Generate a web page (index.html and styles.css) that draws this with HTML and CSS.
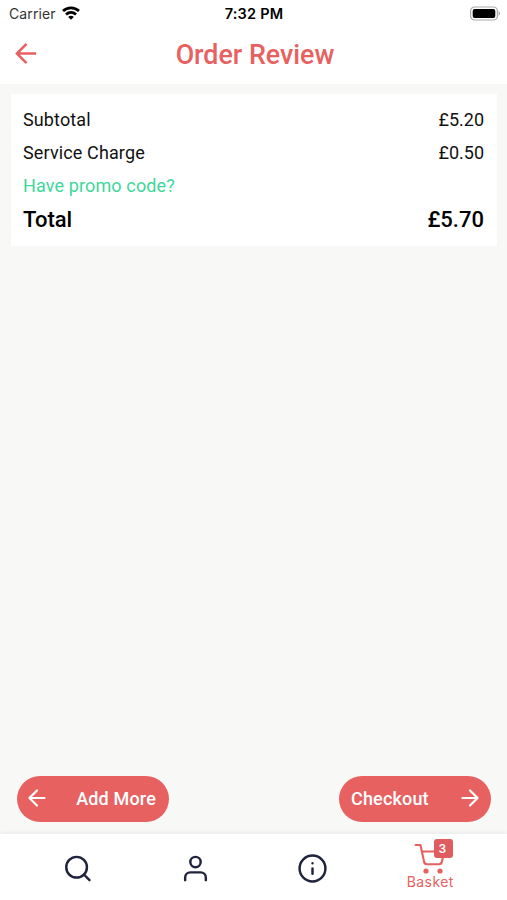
FILE: index.html
```html
<!DOCTYPE html>
<html lang="en">
<head>
<meta charset="utf-8">
<title>Order Review</title>
<link rel="stylesheet" href="styles.css">
</head>
<body>
<div class="app">
  <div class="status">
    <div class="carrier"><span>Carrier</span>
      <svg class="wifi" width="18" height="14" viewBox="0 0 18 14" fill="none" stroke="#000" stroke-width="2.8"><path d="M1 5.1C5.5.8 12.500.8 17 5.100"/><path d="M4 8.500C6.900 5.800 11.100 5.800 14 8.500"/><path d="M9 13.700L6.200 10.900C7.800 9.500 10.200 9.500 11.800 10.900Z" fill="#000" stroke="none"/></svg>
    </div>
    <span class="time">7:32 PM</span>
    <div class="power"><svg width="31" height="16" viewBox="0 0 31 16"><rect x=".6" y="1" width="26.800" height="13" rx="4" fill="#fff" stroke="#aaa" stroke-width="1.200"/><rect x="2.700" y="3" width="22.600" height="9" rx="2" fill="#000"/><path d="M28.600 5.300c2 .8 2 3.600 0 4.400z" fill="#aaa"/></svg></div>
  </div>
  <header class="header">
    <svg class="back" width="33" height="33" viewBox="0 0 24 24"><path d="M19 12H5M12 19l-7-7 7-7"/></svg>
    <h1>Order Review</h1>
    <span></span>
  </header>
  <main class="content">
    <section class="summary">
      <div class="row"><span>Subtotal</span><span>£5.20</span></div>
      <div class="row"><span>Service Charge</span><span>£0.50</span></div>
      <div class="row promo"><span>Have promo code?</span></div>
      <div class="row total"><span>Total</span><span>£5.70</span></div>
    </section>
    <div class="actions">
      <button class="button"><svg width="26" height="26" viewBox="0 0 24 24"><path d="M19 12H5M12 19l-7-7 7-7"/></svg><span>Add More</span></button>
      <button class="button"><span>Checkout</span><svg width="26" height="26" viewBox="0 0 24 24"><path d="M5 12h14M12 5l7 7-7 7"/></svg></button>
    </div>
  </main>
  <nav class="tabs">
    <div class="tab"><svg width="31" height="31" viewBox="0 0 24 24"><circle cx="11.300" cy="11" r="8"/><path d="M21.300 21l-4.350-4.350"/></svg></div>
    <div class="tab"><svg width="31" height="31" viewBox="0 0 24 24"><path d="M20 21v-2a4 4 0 0 0-4-4H8a4 4 0 0 0-4 4v2"/><circle cx="12" cy="7" r="4"/></svg></div>
    <div class="tab"><svg width="31" height="31" viewBox="0 0 24 24"><circle cx="12" cy="12" r="10"/><path d="M12 16v-4M12 8h.01"/></svg></div>
    <div class="tab active">
      <div class="cart">
        <svg width="32" height="32" viewBox="0 0 32 32"><path d="M1.500 2H6.500L10 18.500C10.300 20.300 11.300 21.200 13 21.200H25C26.700 21.200 27.700 20.300 28 18.500L30 8.500H8"/><circle class="wheel" cx="12" cy="28" r="2.600"/><circle class="wheel" cx="26" cy="28" r="2.600"/></svg>
        <span class="badge">3</span>
      </div>
      <span class="label">Basket</span>
    </div>
  </nav>
</div>
</body>
</html>
```

FILE: styles.css
```css
* { box-sizing: border-box; }
body { margin: 0; font-family: Roboto, sans-serif; color: #111; }
svg { display: block; flex: none; }
.app { width: 507px; height: 900px; display: flex; flex-direction: column; background: #f8f8f7; overflow: hidden; }
.status { height: 28px; padding: 0 6px 0 9px; display: grid; grid-template-columns: 1fr auto 1fr; align-items: center; background: #fff; font-family: Inter, sans-serif; font-size: 14px; }
.carrier { display: flex; align-items: center; gap: 6px; color: #333; letter-spacing: .12px; }
.carrier span { margin-top: -2px; }
.wifi { margin-top: -2px; }
.time { margin: -2px 2px 0 0; font-size: 14.5px; font-weight: 600; letter-spacing: .2px; color: #000; }
.power { display: flex; justify-content: flex-end; margin-top: -1px; }
.header { height: 56px; padding: 0 10px; display: grid; grid-template-columns: 1fr auto 1fr; align-items: center; background: #fff; }
.header h1 { margin: -3px 0 0 3px; font-size: 26.8px; line-height: 32px; font-weight: 500; color: #e76161; }
.back { margin-top: -6px; fill: none; stroke: #e76161; stroke-width: 1.8; }
.content { flex: 1; display: flex; flex-direction: column; justify-content: space-between; padding: 10px 10px 12px 11px; }
.summary { height: 152px; padding: 9px 13px 0 12px; background: #fff; }
.row { height: 33px; display: flex; justify-content: space-between; align-items: center; font-size: 18px; }
.row span:first-child { letter-spacing: .13px; }
.row span { margin-top: -1px; }
.promo { color: #3ed79c; }
.total { height: 35px; font-size: 22px; font-weight: 500; color: #000; }
.total span:first-child { letter-spacing: 0; }
.total span { margin-top: 0; }
.actions { display: flex; justify-content: space-between; padding: 0 6px; }
.button { width: 152px; height: 46px; border: 0; border-radius: 23px; padding: 0 13px 0 7px; display: flex; justify-content: space-between; align-items: center; background: #e76161; color: #fff; font: 500 18px Roboto, sans-serif; letter-spacing: .17px; }
.button:last-child { padding: 0 8px 0 12px; }
.button span { margin-top: -2px; }
.button svg { margin-top: -2px; fill: none; stroke: #fff; stroke-width: 2; stroke-linecap: round; stroke-linejoin: round; }
.tabs { height: 66px; padding: 0 18px 0 19px; display: grid; grid-template-columns: repeat(4, 1fr); background: #fff; box-shadow: 0 -1px 4px rgba(0, 0, 0, .07); }
.tab { display: flex; flex-direction: column; align-items: center; justify-content: center; padding-top: 2px; }
.tab svg { fill: none; stroke: #20233c; stroke-width: 1.9; stroke-linecap: round; stroke-linejoin: round; }
.active { justify-content: flex-start; padding-top: 9px; color: #e76161; }
.cart { position: relative; }
.cart svg { stroke: #e76161; stroke-width: 2.1; }
.cart .wheel { fill: #e76161; stroke: none; }
.badge { position: absolute; left: 20px; top: -4px; width: 19px; height: 19px; border-radius: 3px; background: #e05c5e; color: #fff; font: 600 12px/20px Inter, sans-serif; text-align: center; padding-right: 3px; }
.label { margin-top: -2px; font: 400 14px/17px Inter, sans-serif; letter-spacing: .4px; }
```
